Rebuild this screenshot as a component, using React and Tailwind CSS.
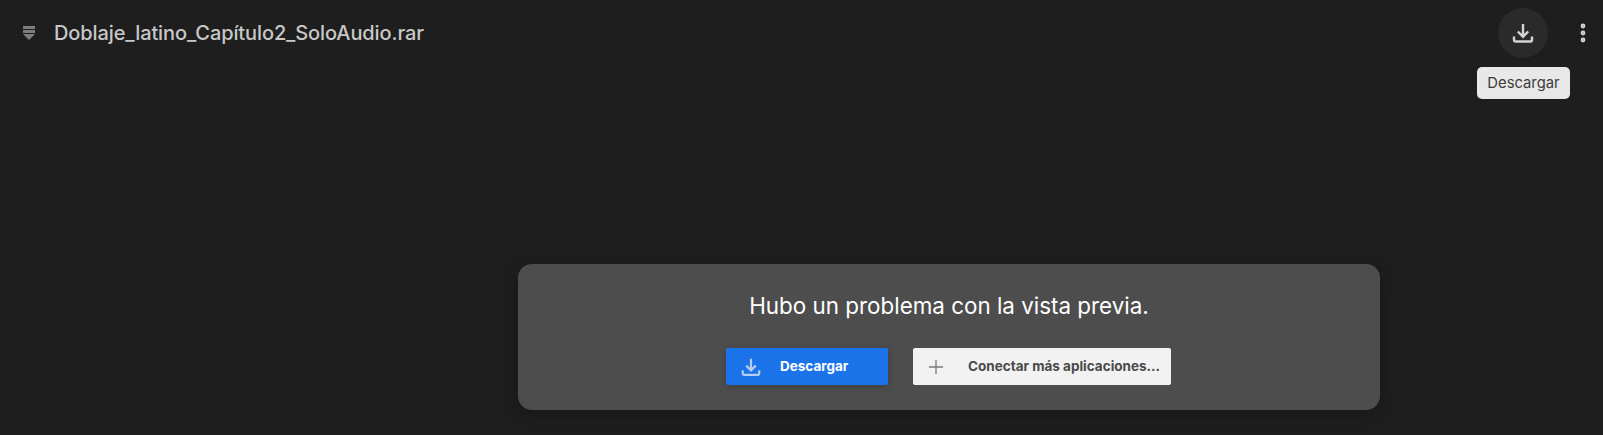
import { MoreVertical } from "lucide-react";

function DownloadIcon({ className }) {
  return (
    <svg viewBox="0 0 24 24" fill="none" stroke="currentColor" strokeWidth="2.4" className={className}>
      <path d="M12 3v12.5M6.8 10.5l5.2 5.2 5.2-5.2" />
      <path d="M3 15.5v3.2c0 1 .8 1.8 1.8 1.8h14.4c1 0 1.8-.8 1.8-1.8v-3.2" />
    </svg>
  );
}

export default function App() {
  return (
    <div className="h-[435px] w-full overflow-hidden bg-[#1e1e1e] font-['Inter',sans-serif]">
      {/* Top bar */}
      <header className="relative flex h-[66px] items-center pl-[23px] pr-[8px]">
        <svg viewBox="0 0 12 14" className="h-[14px] w-[12px] text-[#7c7c7c]" fill="currentColor">
          <rect x="0" y="0" width="12" height="3" />
          <rect x="0" y="4" width="12" height="3" />
          <path d="M0 8h12l-6 6z" />
        </svg>
        <h1 className="ml-[19px] text-[20px] font-medium tracking-[-0.1px] text-[#c8c8c8]">Doblaje_latino_Capítulo2_SoloAudio.rar</h1>

        <div className="ml-auto flex items-center gap-[23px]">
          <button className="flex h-[50px] w-[50px] items-center justify-center rounded-full bg-[#2a2a2a] text-[#d4d4d4]">
            <DownloadIcon className="h-[24px] w-[24px]" />
          </button>
          <button className="flex h-[24px] w-[24px] items-center justify-center text-[#d4d4d4]">
            <MoreVertical size={24} strokeWidth={2.8} />
          </button>
        </div>

        <div className="absolute left-[1477px] top-[67px] flex h-[32px] w-[93px] items-center justify-center rounded-[5px] bg-[#e8e8e8] text-[14.8px] text-[#3c3c3c]">
          Descargar
        </div>
      </header>

      {/* Preview error */}
      <main className="pl-[518px] pt-[198px]">
        <div className="flex h-[146px] w-[862px] flex-col items-center rounded-[14px] bg-[#4d4d4d] pt-[26px] shadow-[0_4px_16px_rgba(0,0,0,0.25)]">
          <p className="text-[22.4px] leading-[32px] text-white">Hubo un problema con la vista previa.</p>
          <div className="mr-[1px] mt-[26px] flex gap-[25px]">
            <button className="flex h-[37px] w-[162px] items-center rounded-[2px] bg-[#1a73e8] pl-[14px] text-[13.5px] font-bold text-white shadow-[0_2px_6px_rgba(0,0,0,0.2)]">
              <DownloadIcon className="h-[22px] w-[22px] text-[#b5cdf0]" />
              <span className="ml-[18px]">Descargar</span>
            </button>
            <button className="flex h-[37px] w-[258px] items-center rounded-[2px] bg-[#f2f2f2] pl-[15px] text-[13.5px] font-bold text-[#4a4a4a]">
              <svg viewBox="0 0 16 16" className="h-[16px] w-[16px] text-[#7a7a7a]" stroke="currentColor" strokeWidth="1.3">
                <path d="M8 1v14M1 8h14" />
              </svg>
              <span className="ml-[24px]">Conectar más aplicaciones...</span>
            </button>
          </div>
        </div>
      </main>
    </div>
  );
}
